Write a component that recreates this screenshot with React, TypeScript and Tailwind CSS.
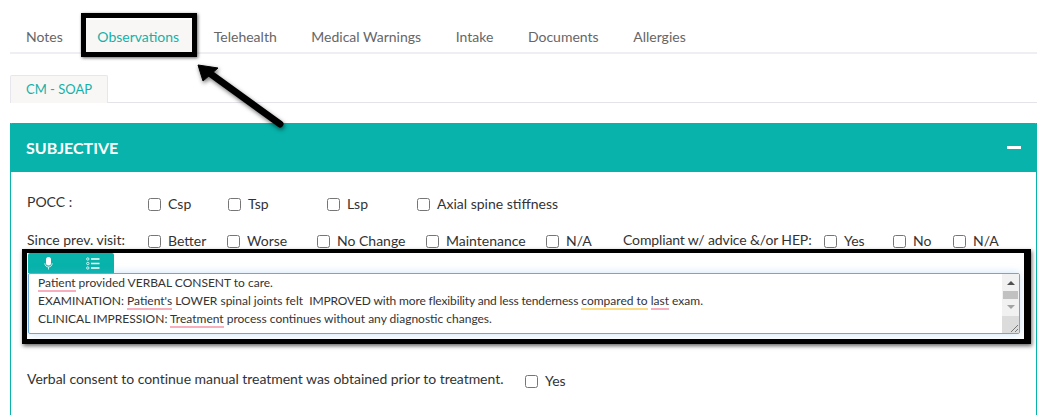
import React from 'react';

const tabs = ['Notes', 'Observations', 'Telehealth', 'Medical Warnings', 'Intake', 'Documents', 'Allergies'];

function Check({ label, width }: { label: string; width: string }) {
  return (
    <label className={`flex items-center gap-[7px] shrink-0 ${width}`}>
      <input type="checkbox" className="w-[13px] h-[13px] m-0" />
      <span>{label}</span>
    </label>
  );
}

function Flag({ color, children }: { color: string; children: React.ReactNode }) {
  return <span className={`border-b-2 ${color}`}>{children}</span>;
}

export default function App() {
  return (
    <div className="relative h-[415px] w-[1047px] overflow-hidden bg-white px-[10px] pt-[20px] font-['Lato','Open_Sans',sans-serif] text-[14px] text-[#333]">
      <div className="flex h-[34px] border-b-2 border-[#eeeef3]">
        {tabs.map((t, i) => (
          <div
            key={t}
            className={`px-[17.3px] pt-[8px] leading-[18px] text-[14px] ${i === 0 ? '-ml-[1.3px]' : ''} ${t === 'Observations' ? 'bg-[#f8f7f6] text-[#14b1a8]' : 'text-[#666]'}`}
          >
            {t}
          </div>
        ))}
      </div>

      <div className="mt-[21px] flex h-[28px] border-b border-[#e3e3ea]">
        <div className="h-[28px] w-[98px] rounded-t-[2px] border border-b-0 border-[#e6e6ec] bg-[#f8f7f6] pt-[4px] text-center text-[13px] leading-[18px] text-[#14b1a8]">
          CM - SOAP
        </div>
      </div>

      <div className="mt-[20px] w-[1027px] border border-t-0 border-[#07b3aa]">
        <div className="-mx-px flex h-[49px] items-center justify-between rounded-t-[2px] bg-[#07b3aa] px-[16px] text-white">
          <span className="text-[16px] font-bold">SUBJECTIVE</span>
          <span className="block h-[3px] w-[14px] bg-white" />
        </div>

        <div className="h-[300px] px-[16px]">
          <div className="flex pt-[21px] leading-[18px]">
            <span className="w-[121px] shrink-0">POCC :</span>
            <div className="flex pt-[2px]">
              <Check label="Csp" width="w-[80px]" />
              <Check label="Tsp" width="w-[99px]" />
              <Check label="Lsp" width="w-[90px]" />
              <Check label="Axial spine stiffness" width="w-[200px]" />
            </div>
          </div>

          <div className="mt-[18px] flex leading-[18px]">
            <span className="w-[121px] shrink-0">Since prev. visit:</span>
            <div className="flex pt-[1px]">
              <Check label="Better" width="w-[79px]" />
              <Check label="Worse" width="w-[90px]" />
              <Check label="No Change" width="w-[109px]" />
              <Check label="Maintenance" width="w-[120px]" />
              <Check label="N/A" width="w-[77px]" />
            </div>
            <span className="w-[201px] shrink-0 tracking-[-0.13px]">Compliant w/ advice &amp;/or HEP:</span>
            <div className="flex pt-[1px]">
              <Check label="Yes" width="w-[69px]" />
              <Check label="No" width="w-[60px]" />
              <Check label="N/A" width="w-[60px]" />
            </div>
          </div>

          <div className="ml-px mt-[3px] flex h-[20px] w-[86px] items-center rounded-t-[2px] bg-[#07b3aa] text-white">
            <svg className="ml-[16px]" width="9" height="13" viewBox="0 0 9 13">
              <rect x="2" y="0" width="5" height="8.5" rx="2.5" fill="#fff" />
              <path d="M.8 6.2c0 2.3 1.6 3.8 3.7 3.8s3.7-1.5 3.7-3.8M4.5 10v2.5" stroke="#fff" strokeOpacity=".75" fill="none" />
            </svg>
            <svg className="ml-[33px]" width="14" height="13" viewBox="0 0 14 13">
              <circle cx="1.8" cy="2" r="1.2" stroke="#fff" strokeWidth=".8" fill="none" />
              <circle cx="1.8" cy="6.5" r="1.2" stroke="#fff" strokeWidth=".8" fill="none" />
              <circle cx="1.8" cy="11" r="1.2" stroke="#fff" strokeWidth=".8" fill="none" />
              <path d="M5 2h8.5M5 6.5h8.5M5 11h8.5" stroke="#fff" strokeWidth="1.3" />
            </svg>
          </div>

          <div className="ml-px flex h-[61px] w-[992px] rounded-[2px] border border-[#6aa9dc] text-[12px] leading-[18px] shadow-[0_0_8px_rgba(102,175,233,0.35)]">
            <div className="flex-1 pl-[9px] text-[#333]">
              <div><Flag color="border-[#f8aebd]">Patient</Flag> provided VERBAL CONSENT to care.</div>
              <div>
                EXAMINATION: <Flag color="border-[#f8aebd]">Patient's</Flag> LOWER spinal joints felt&nbsp;{' '}
                <span className="tracking-[-0.14px]">IMPROVED with more flexibility and less tenderness</span>{' '}
                <Flag color="border-[#fcdc84]">compared to</Flag> <Flag color="border-[#f8aebd]">last</Flag> exam.
              </div>
              <div>CLINICAL IMPRESSION: <Flag color="border-[#f8aebd]">Treatment</Flag> process continues without any diagnostic changes.</div>
            </div>
            <div className="flex w-[17px] shrink-0 flex-col items-center bg-[#f1f1f1]">
              <span className="mt-[7px] h-0 w-0 border-x-[4px] border-b-[4px] border-x-transparent border-b-[#505050]" />
              <span className="mt-[6px] h-[8px] w-[15px] bg-[#c1c1c1]" />
              <span className="mt-[6px] h-0 w-0 border-x-[4px] border-t-[4px] border-x-transparent border-t-[#a3a3a3]" />
              <span className="mt-auto flex h-[17px] w-[17px] items-end justify-end bg-[#dcdcdc]">
                <svg width="9" height="9" viewBox="0 0 9 9">
                  <path d="M1 8 8 1M5 8l3-3" stroke="#777" strokeWidth="1" fill="none" />
                </svg>
              </span>
            </div>
          </div>

          <div className="mt-[36px] flex leading-[18px]">
            <span className="w-[498px] shrink-0 tracking-[-0.03px]">Verbal consent to continue manual treatment was obtained prior to treatment.</span>
            <div className="pt-[2px]">
              <Check label="Yes" width="w-[60px]" />
            </div>
          </div>
        </div>
      </div>

      {/* annotation overlays */}
      <div className="absolute left-[81px] top-[13px] h-[44px] w-[116px] border-[5px] border-black shadow-[1px_1px_3px_rgba(0,0,0,0.6)]" />
      <div className="absolute left-[22px] top-[249px] h-[95px] w-[1009px] border-[5px] border-t-[4px] border-r-[7px] border-black shadow-[1px_2px_4px_rgba(0,0,0,0.6)]" />
      <svg className="absolute left-[190px] top-[58px]" width="110" height="80" viewBox="0 0 110 80">
        <g style={{ filter: 'drop-shadow(1px 2px 2px rgba(0,0,0,0.55))' }}>
          <path d="M90 66 18 14" stroke="#000" strokeWidth="7" strokeLinecap="round" fill="none" />
          <path d="M8 7 28 10 13 23Z" fill="#000" stroke="#000" strokeWidth="1" strokeLinejoin="round" />
        </g>
      </svg>
    </div>
  );
}
